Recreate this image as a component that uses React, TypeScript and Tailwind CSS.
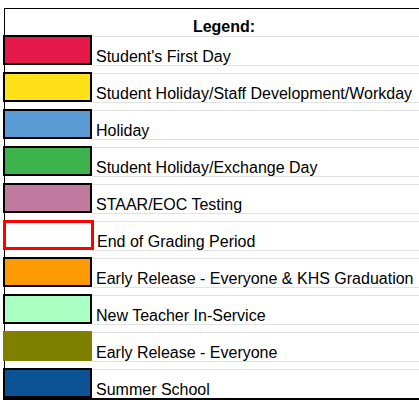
import React from "react";

type Item = { label: string; bg: string; border: string; extra?: string };

const items: Item[] = [
  { label: "Student's First Day", bg: "bg-[#e6194b]", border: "border-2 border-black" },
  { label: "Student Holiday/Staff Development/Workday", bg: "bg-[#ffe119]", border: "border-2 border-black" },
  { label: "Holiday", bg: "bg-[#5b9bd5]", border: "border-2 border-black" },
  { label: "Student Holiday/Exchange Day", bg: "bg-[#3cb44b]", border: "border-2 border-black" },
  { label: "STAAR/EOC Testing", bg: "bg-[#c27ba0]", border: "border-2 border-black" },
  { label: "End of Grading Period", bg: "bg-white", border: "border-[3px] border-[#ff0000] w-[91px]", extra: "pl-[5px]" },
  { label: "Early Release - Everyone & KHS Graduation", bg: "bg-[#ff9900]", border: "border-2 border-black" },
  { label: "New Teacher In-Service", bg: "bg-[#aaffc3]", border: "border-2 border-black" },
  { label: "Early Release - Everyone", bg: "bg-[#808000]", border: "" },
  { label: "Summer School", bg: "bg-[#0b5394]", border: "border-2 border-black" },
];

export default function App() {
  return (
    <div className="w-[419px] h-[409px] overflow-hidden bg-white" style={{ fontFamily: '"Liberation Sans", Arial, sans-serif' }}>
      <div className="ml-[4px] mt-[8px] w-[415px] border-t border-l border-black">
        <div className="h-[28px] border-b border-[#e2e2e2] flex justify-start">
          <div className="w-[438px] shrink-0 text-center font-bold text-[16px] leading-[18px] pt-[9px] text-black">Legend:</div>
        </div>
        {items.map((it, i) => {
          const last = i === items.length - 1;
          return (
            <div key={i} className={last ? "flex h-[28px]" : "flex h-[37px]"}>
              <div className="w-[87px] shrink-0">
                <div className={`-ml-[2px] -mt-[2px] w-[89px] h-[30px] ${it.bg} ${it.border}`} />
              </div>
              <div className="flex-1 flex flex-col">
                <div className={`h-[28px] flex items-end pl-[4px] text-[16px] leading-[16px] text-black whitespace-nowrap ${it.extra ?? ""}`}>
                  {it.label}
                </div>
                {!last && (
                  <>
                    <div className="h-[1px] bg-[#e2e2e2]" />
                    <div className="h-[7px]" />
                    <div className="h-[1px] bg-[#e2e2e2]" />
                  </>
                )}
              </div>
            </div>
          );
        })}
        <div className="h-[2px] bg-black -ml-[2px]" />
      </div>
    </div>
  );
}
